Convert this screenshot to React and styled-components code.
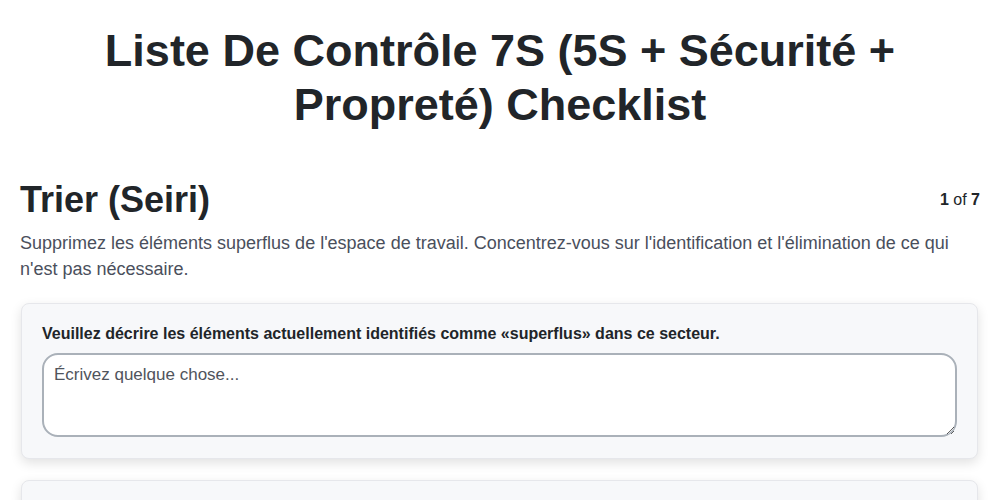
import React from "react";
import styled, { createGlobalStyle } from "styled-components";

const GlobalStyle = createGlobalStyle`
  body {
    margin: 0;
    background: #fff;
    font-family: "Liberation Sans", Arial, sans-serif;
    color: #212529;
  }
`;

const Page = styled.main`
  padding: 24px 20px 20px 20px;
`;

const Title = styled.h1`
  margin: 0 0 46px 0;
  padding: 0 80px;
  text-align: center;
  font-size: 45px;
  line-height: 1.2;
  font-weight: 700;
  color: #212529;
`;

const SectionHeader = styled.div`
  display: flex;
  justify-content: space-between;
  align-items: center;
`;

const SectionTitle = styled.h2`
  margin: 0;
  font-size: 36px;
  line-height: 1.2;
  font-weight: 700;
  color: #212529;
`;

const Counter = styled.span`
  font-size: 16px;
  color: #212529;

  b {
    font-weight: 700;
  }
`;

const Description = styled.p`
  margin: 9px 0 21px 0;
  font-size: 18px;
  line-height: 26px;
  color: #4a4f5c;
`;

const Card = styled.section`
  background: #f7f8fa;
  border: 1px solid #e6e7eb;
  border-radius: 8px;
  padding: 20px 20px 21px 20px;
  margin: 0 2px 21px 1px;
  box-shadow: 0 4px 12px rgba(0, 0, 0, 0.12);
  min-height: ${(p) => p.minHeight || 0}px;
`;

const Label = styled.label`
  display: block;
  font-size: 16px;
  line-height: 19px;
  font-weight: 700;
  color: #212529;
  margin-bottom: 10px;
`;

const TextArea = styled.textarea`
  display: block;
  box-sizing: border-box;
  width: 100%;
  height: 84px;
  padding: 10px;
  border: 2px solid #aab1b9;
  border-radius: 16px;
  background: #fff;
  font-family: "Liberation Sans", Arial, sans-serif;
  font-size: 17px;
  line-height: 20px;
  color: #212529;
  outline: none;

  &::placeholder {
    color: #50545c;
  }
`;

export default function App() {
  return (
    <>
      <GlobalStyle />
      <Page>
        <Title>Liste De Contrôle 7S (5S + Sécurité + Propreté) Checklist</Title>
        <SectionHeader>
          <SectionTitle>Trier (Seiri)</SectionTitle>
          <Counter>
            <b>1</b> of <b>7</b>
          </Counter>
        </SectionHeader>
        <Description>
          Supprimez les éléments superflus de l'espace de travail. Concentrez-vous sur
          l'identification et l'élimination de ce qui n'est pas nécessaire.
        </Description>
        <Card>
          <Label htmlFor="q1">
            Veuillez décrire les éléments actuellement identifiés comme «superflus» dans ce secteur.
          </Label>
          <TextArea id="q1" placeholder="Écrivez quelque chose..." />
        </Card>
        <Card minHeight={120}>
          <Label htmlFor="q2">
            Quels critères utilisez-vous pour déterminer si un élément est nécessaire ?
          </Label>
          <TextArea id="q2" placeholder="Écrivez quelque chose..." />
        </Card>
      </Page>
    </>
  );
}
